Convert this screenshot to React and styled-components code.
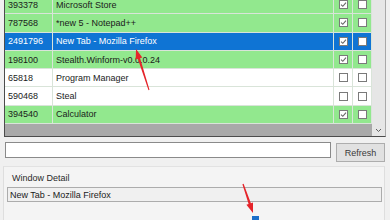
import React from 'react'
import styled, { createGlobalStyle } from 'styled-components'

const GlobalStyle = createGlobalStyle`
  html, body {
    margin: 0;
    padding: 0;
    background: #f0f0f0;
  }
`

const windows = [
  { id: '393378', title: 'Microsoft Store', visible: true },
  { id: '787568', title: '*new 5 - Notepad++', visible: true },
  { id: '2491796', title: 'New Tab - Mozilla Firefox', visible: true, selected: true },
  { id: '198100', title: 'Stealth.Winform-v0.0.0.24', visible: true },
  { id: '65818', title: 'Program Manager', visible: false },
  { id: '590468', title: 'Steal', visible: false },
  { id: '394540', title: 'Calculator', visible: true },
]

const Window = styled.div`
  position: relative;
  width: 390px;
  height: 220px;
  overflow: hidden;
  display: flex;
  flex-direction: column;
  background: #f0f0f0;
  font-family: "Liberation Sans", Arial, sans-serif;
  font-size: 9px;
  color: #1b1b1b;
`

const ListView = styled.div`
  margin-left: 4px;
  width: 380px;
  height: 136px;
  display: flex;
  border-left: 1px solid #4c4c4c;
  border-bottom: 1px solid #4c4c4c;
  border-right: 1px solid #a8a8a8;
`

const Rows = styled.div`
  flex: 1;
  overflow: hidden;
  background: #a9a9a9;
`

const Row = styled.div`
  display: grid;
  grid-template-columns: 48px 1fr 19px 19px;
  height: 18.3px;
  background: ${p => (p.$selected ? '#0f74d4' : p.$visible ? '#92e88e' : '#ffffff')};
  color: ${p => (p.$selected ? '#ffffff' : '#1b1b1b')};
  &:first-child {
    margin-top: -4px;
  }
`

const Cell = styled.div`
  display: flex;
  align-items: center;
  justify-content: ${p => (p.$center ? 'center' : 'flex-start')};
  padding-left: ${p => (p.$center ? '0' : '3px')};
  border-right: 1px solid #d9e4d9;
  border-bottom: 1px solid #d9e4d9;
  white-space: nowrap;
  overflow: hidden;
`

const Box = styled.span`
  width: 9px;
  height: 9px;
  box-sizing: border-box;
  border: 1px solid #7a7a7a;
  background: #ffffff;
  display: flex;
  align-items: center;
  justify-content: center;
`

const ScrollBar = styled.div`
  width: 13px;
  background: #e6e6e6;
  display: flex;
  flex-direction: column;
  justify-content: flex-end;
  align-items: center;
  padding-bottom: 3px;
`

const ToolRow = styled.div`
  display: flex;
  align-items: flex-start;
  margin: 5px 0 0 5px;
  gap: 5px;
`

const SearchInput = styled.div`
  width: 326px;
  height: 16px;
  box-sizing: border-box;
  background: #ffffff;
  border: 1px solid #8a8a8a;
`

const Button = styled.div`
  width: 49px;
  height: 19px;
  margin-top: 1px;
  box-sizing: border-box;
  background: #e1e1e1;
  border: 1px solid #adadad;
  display: flex;
  align-items: center;
  justify-content: center;
  color: #3a3a3a;
`

const GroupBox = styled.div`
  flex: 1;
  margin: 4px 0 0 3px;
  width: 382px;
  background: #f4f4f4;
  border-left: 1px solid #dedede;
  border-top: 1px solid #e2e2e2;
  border-right: 1px solid #dedede;
  padding: 5px 2px 0 3px;
  box-sizing: border-box;
`

const GroupLabel = styled.div`
  padding-left: 5px;
  height: 13px;
  line-height: 13px;
  color: #2a2a2a;
`

const DetailBox = styled.div`
  margin-top: 2px;
  height: 15px;
  box-sizing: border-box;
  background: #f0f0f0;
  border: 1px solid #acacac;
  padding-left: 2px;
  display: flex;
  align-items: center;
  color: #1b1b1b;
`

const Overlay = styled.svg`
  position: absolute;
  left: 0;
  top: 0;
  pointer-events: none;
`

const Marker = styled.div`
  position: absolute;
  left: 252px;
  top: 216px;
  width: 7px;
  height: 6px;
  background: #1c6fc9;
`

const Check = ({ checked }) => (
  <Box>
    {checked && (
      <svg width="7" height="7" viewBox="0 0 7 7">
        <path d="M1 3.6 L2.8 5.3 L6 1.6" fill="none" stroke="#666666" strokeWidth="1.1" />
      </svg>
    )}
  </Box>
)

export default function App() {
  return (
    <Window>
      <GlobalStyle />
      <ListView>
        <Rows>
          {windows.map(w => (
            <Row key={w.id} $selected={w.selected} $visible={w.visible}>
              <Cell>{w.id}</Cell>
              <Cell>{w.title}</Cell>
              <Cell $center><Check checked={w.visible} /></Cell>
              <Cell $center><Check checked={false} /></Cell>
            </Row>
          ))}
        </Rows>
        <ScrollBar>
          <svg width="7" height="5" viewBox="0 0 7 5">
            <path d="M1 1 L3.5 3.5 L6 1" fill="none" stroke="#606060" strokeWidth="1" />
          </svg>
        </ScrollBar>
      </ListView>
      <ToolRow>
        <SearchInput />
        <Button>Refresh</Button>
      </ToolRow>
      <GroupBox>
        <GroupLabel>Window Detail</GroupLabel>
        <DetailBox>New Tab - Mozilla Firefox</DetailBox>
      </GroupBox>
      <Marker />
      <Overlay width="390" height="220" viewBox="0 0 390 220">
        <polygon
          points="136,49 142.3,57.5 140.1,58.2 149.5,89.8 148.5,90.2 137.9,58.9 135.7,59.6"
          fill="#e5242a"
        />
        <polygon
          points="253,213 246.4,204.7 248.6,204 242.4,184.2 243.6,183.8 250.9,203.2 253,202.4"
          fill="#e5242a"
        />
      </Overlay>
    </Window>
  )
}
